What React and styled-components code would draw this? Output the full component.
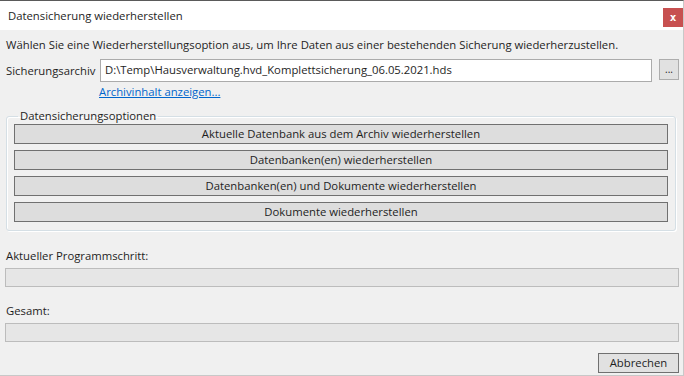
import React from 'react'
import styled, { createGlobalStyle } from 'styled-components'

const GlobalStyle = createGlobalStyle`
    html, body {
        margin: 0;
        padding: 0;
        background: #f0f0f0;
    }
    body {
        font-family: "Open Sans", "Noto Sans", sans-serif;
        font-size: 11.3px;
        color: #1e1e1e;
    }
`

const options = [
    "Aktuelle Datenbank aus dem Archiv wiederherstellen",
    "Datenbanken(en) wiederherstellen",
    "Datenbanken(en) und Dokumente wiederherstellen",
    "Dokumente wiederherstellen",
]

function App() {
    return (
        <Window>
            <GlobalStyle />
            <TitleBar>
                <Title>Datensicherung wiederherstellen</Title>
                <CloseBtn>x</CloseBtn>
            </TitleBar>
            <Body>
                <Intro>Wählen Sie eine Wiederherstellungsoption aus, um Ihre Daten aus einer bestehenden Sicherung wiederherzustellen.</Intro>
                <ArchiveRow>
                    <Label>Sicherungsarchiv</Label>
                    <PathBox>D:\Temp\Hausverwaltung.hvd_Komplettsicherung_06.05.2021.hds</PathBox>
                    <BrowseBtn>...</BrowseBtn>
                </ArchiveRow>
                <LinkText href="#">Archivinhalt anzeigen...</LinkText>
                <Group>
                    <Legend>Datensicherungsoptionen</Legend>
                    {options.map((o) => (
                        <OptionBtn key={o}>{o}</OptionBtn>
                    ))}
                </Group>
                <ProgressLabel $gap={16}>Aktueller Programmschritt:</ProgressLabel>
                <ProgressBar />
                <ProgressLabel $gap={15}>Gesamt:</ProgressLabel>
                <ProgressBar />
                <Footer>
                    <CancelBtn>Abbrechen</CancelBtn>
                </Footer>
            </Body>
        </Window>
    )
}

export default App

const Window = styled.div`
    width: 684px;
    height: 376px;
    box-sizing: border-box;
    border-top: 1px solid #5a5a5a;
    border-right: 1px solid #c8c8c8;
    border-bottom: 1px solid #c8c8c8;
    background: #f0f0f0;
    display: flex;
    flex-direction: column;
    overflow: hidden;
`

const TitleBar = styled.div`
    height: 29px;
    background: #ffffff;
    display: flex;
    align-items: flex-start;
    justify-content: space-between;
    flex-shrink: 0;
`

const Title = styled.div`
    padding: 7px 0 0 8px;
    color: #1e1e1e;
`

const CloseBtn = styled.div`
    margin-top: 7px;
    width: 20px;
    height: 19px;
    background: #c75050;
    color: #ffffff;
    font-family: "DejaVu Sans Mono", monospace;
    font-weight: bold;
    font-size: 11px;
    display: flex;
    align-items: center;
    justify-content: center;
    line-height: 1;
`

const Body = styled.div`
    flex: 1;
    display: flex;
    flex-direction: column;
    padding: 6px 4px 0 5px;
`

const Intro = styled.div`
    padding-left: 1px;
    height: 18px;
    line-height: 18px;
`

const ArchiveRow = styled.div`
    display: flex;
    align-items: center;
    margin-top: 5px;
    height: 23px;
`

const Label = styled.div`
    width: 94px;
    padding-left: 1px;
`

const PathBox = styled.div`
    width: 552px;
    height: 23px;
    box-sizing: border-box;
    background: #ffffff;
    border: 1px solid #ababab;
    padding: 0 4px;
    line-height: 20px;
    white-space: nowrap;
    overflow: hidden;
`

const BrowseBtn = styled.div`
    margin-left: 7px;
    width: 20px;
    height: 21px;
    align-self: flex-start;
    box-sizing: border-box;
    border: 1px solid #adadad;
    background: #e1e1e1;
    font-size: 10px;
    display: flex;
    align-items: flex-end;
    justify-content: center;
    padding-bottom: 5px;
    line-height: 1;
`

const LinkText = styled.a`
    margin: 1px 0 0 94px;
    color: #0066cc;
    text-decoration: underline;
    line-height: 17px;
    align-self: flex-start;
`

const Group = styled.fieldset`
    margin: 9px 3px 0 1px;
    padding: 1px 7px 8px 7px;
    border: 1px solid #d5dfe5;
    box-shadow: 1px 1px 0 #ffffff, inset 1px 1px 0 #ffffff;
    border-radius: 3px;
    display: flex;
    flex-direction: column;
    gap: 6px;
`

const Legend = styled.legend`
    padding: 0 2px;
    margin-left: 4px;
    line-height: 14px;
`

const OptionBtn = styled.button`
    height: 20px;
    box-sizing: border-box;
    border: 1px solid #707070;
    background: #dddddd;
    font-family: inherit;
    font-size: 11.3px;
    color: #1e1e1e;
    padding: 0;
    line-height: 18px;
`

const ProgressLabel = styled.div`
    margin-top: ${(p) => p.$gap}px;
    padding-left: 1px;
    line-height: 17px;
`

const ProgressBar = styled.div`
    margin-top: 4px;
    height: 19px;
    box-sizing: border-box;
    border: 1px solid #bcbcbc;
    background: #e6e6e6;
`

const Footer = styled.div`
    display: flex;
    justify-content: flex-end;
    margin-top: 11px;
`

const CancelBtn = styled.button`
    width: 81px;
    height: 20px;
    box-sizing: border-box;
    border: 1px solid #707070;
    background: #e1e1e1;
    font-family: inherit;
    font-size: 11.3px;
    color: #1e1e1e;
    padding: 0;
    line-height: 18px;
`
